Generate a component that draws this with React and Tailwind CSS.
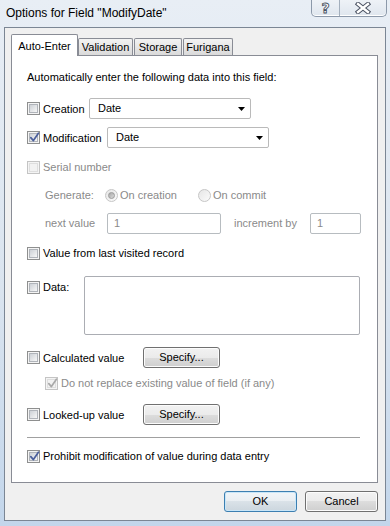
import React from 'react';

// Win7 style checkbox
const Check = ({ checked, disabled }) => (
  <span
    className={`relative flex h-[13px] w-[13px] shrink-0 items-center justify-center border bg-[#f4f4f4] ${
      disabled ? 'border-[#c4c4c4]' : 'border-[#8e8f8f]'
    }`}
  >
    <span
      className={`h-[9px] w-[9px] border ${
        disabled
          ? 'border-[#dedede] bg-[#f2f2f2]'
          : 'border-[#b0b4ba] bg-gradient-to-br from-[#cdd1d6] to-[#f7f7f7]'
      }`}
    />
    {checked && (
      <svg className="absolute left-[1px] top-[0px]" width="11" height="11" viewBox="0 0 11 11">
        <path
          d="M1.8 5.6 L4.4 8.6 L9.4 1.2"
          fill="none"
          stroke={disabled ? '#a9a9a9' : '#4b5f9c'}
          strokeWidth="1.7"
          strokeLinecap="round"
          strokeLinejoin="round"
        />
      </svg>
    )}
  </span>
);

const Radio = ({ selected }) => (
  <span className="flex h-[13px] w-[13px] shrink-0 items-center justify-center rounded-full border border-[#c6c6c6] bg-gradient-to-br from-[#e6e6e6] to-[#fbfbfb]">
    {selected && (
      <span className="h-[7px] w-[7px] rounded-full border border-[#9a9a9a] bg-gradient-to-br from-[#a8a8a8] to-[#dcdcdc]" />
    )}
  </span>
);

const CheckRow = ({ checked, disabled, label, className = '' }) => (
  <div className={`flex h-[16px] items-center ${className}`}>
    <Check checked={checked} disabled={disabled} />
    <span className={`ml-[3px] leading-[16px] ${disabled ? 'text-[#8a8a8a]' : 'text-black'}`}>{label}</span>
  </div>
);

const Select = ({ value, className = '' }) => (
  <div
    className={`flex h-[21px] w-[162px] items-center justify-between rounded-[2px] border border-[#bababa] bg-white pl-[8px] pr-[5px] ${className}`}
  >
    <span>{value}</span>
    <svg width="7" height="4" viewBox="0 0 7 4">
      <path d="M0 0 H7 L3.5 4 Z" fill="#000" />
    </svg>
  </div>
);

const Button = ({ children, primary, className = '' }) => (
  <button
    type="button"
    className={`flex h-[21px] items-center justify-center rounded-[3px] border text-black ${
      primary
        ? 'border-[#3c7fb1] bg-[linear-gradient(#f1f5f8_0%,#e9eef2_50%,#dae2e8_50%,#ccd6de_100%)] shadow-[inset_0_0_0_1px_#c9e6f8]'
        : 'border-[#707070] bg-[linear-gradient(#f2f2f2_0%,#ebebeb_50%,#dddddd_50%,#cfcfcf_100%)] shadow-[inset_0_0_0_1px_#fcfcfc]'
    } ${className}`}
  >
    {children}
  </button>
);

const Tab = ({ label, active, className = '' }) =>
  active ? (
    <div className={`flex h-[22px] items-start justify-center rounded-t-[2px] border border-b-0 border-[#898c95] bg-white pt-[3px] ${className}`}>
      {label}
    </div>
  ) : (
    <div
      className={`mb-[1px] flex h-[17px] items-center justify-center rounded-t-[2px] border border-b-0 border-[#898c95] bg-gradient-to-b from-[#f3f3f3] to-[#dadada] ${className}`}
    >
      {label}
    </div>
  );

export default function App() {
  return (
    <div className="flex h-[526px] w-[390px] flex-col overflow-hidden bg-[linear-gradient(180deg,#e8eef5_0%,#dae4ef_55%,#c3d6eb_100%)] font-['Liberation_Sans',Arial,sans-serif] text-[11px] text-black">
      {/* title bar */}
      <div className="flex h-[27px] shrink-0 items-start justify-between">
        <div className="pl-[6px] pt-[6px] text-[12px] leading-[14px]">Options for Field &quot;ModifyDate&quot;</div>
        <div className="mr-[3px] flex h-[17px] w-[76px] rounded-b-[5px] border border-t-0 border-[#8c99aa] bg-[linear-gradient(#eef2f7,#dfe6ee)] shadow-[inset_0_-1px_0_#ffffff]">
          <div className="flex w-[28px] items-center justify-center border-r border-[#a3afbd]">
            <span className="font-['DejaVu_Sans',sans-serif] text-[14px] font-bold leading-[14px] text-white [-webkit-text-stroke:0.9px_#4a5262]">?</span>
          </div>
          <div className="flex flex-1 items-center justify-center">
            <svg width="16" height="12" viewBox="0 0 16 12">
              <path d="M3 2 L13 10 M13 2 L3 10" stroke="#4a5262" strokeWidth="4.4" strokeLinecap="square" />
              <path d="M3 2 L13 10 M13 2 L3 10" stroke="#ffffff" strokeWidth="2.4" strokeLinecap="square" />
            </svg>
          </div>
        </div>
      </div>

      {/* client area */}
      <div className="ml-[4px] flex h-[494px] w-[382px] flex-col border border-[#7b8694] bg-[#f0f0f0] pl-[6px] pr-[7px] pt-[7px]">
        {/* tabs */}
        <div className="relative z-10 mb-[-1px] flex h-[21px] items-end">
          <Tab label="Auto-Enter" active className="w-[67px]" />
          <Tab label="Validation" className="w-[55px]" />
          <Tab label="Storage" className="ml-[1px] w-[48px]" />
          <Tab label="Furigana" className="ml-[1px] w-[50px]" />
        </div>

        {/* panel */}
        <div className="flex h-[428px] w-[367px] flex-col border border-[#898c95] bg-white pl-[15px] pr-[16px]">
          <div className="mt-[13px] h-[16px] leading-[16px]">Automatically enter the following data into this field:</div>

          <div className="mt-[13px] flex h-[21px] items-center">
            <CheckRow label="Creation" className="w-[62px]" />
            <Select value="Date" />
          </div>

          <div className="mt-[8px] flex h-[21px] items-center">
            <CheckRow checked label="Modification" className="w-[80px]" />
            <Select value="Date" />
          </div>

          <CheckRow disabled label="Serial number" className="mt-[11px]" />

          <div className="mt-[12px] flex h-[16px] items-center pl-[18px] text-[#8a8a8a]">
            <span className="w-[60px]">Generate:</span>
            <Radio selected />
            <span className="ml-[2px] w-[78px]">On creation</span>
            <Radio />
            <span className="ml-[2px]">On commit</span>
          </div>

          <div className="mt-[10px] flex h-[21px] items-center pl-[18px] text-[#8a8a8a]">
            <span className="w-[62px]">next value</span>
            <div className="flex h-[21px] w-[114px] items-center rounded-[2px] border border-[#b7bcc0] bg-white pl-[6px]">1</div>
            <span className="ml-[13px] w-[76px]">increment by</span>
            <div className="flex h-[21px] w-[51px] items-center rounded-[2px] border border-[#b7bcc0] bg-white pl-[6px]">1</div>
          </div>

          <CheckRow label="Value from last visited record" className="mt-[11px]" />

          <div className="mt-[15px] flex h-[59px] items-start">
            <CheckRow label="Data:" className="mt-[3px] w-[57px]" />
            <div className="h-[59px] w-[276px] rounded-[2px] border border-[#abadb3] bg-white" />
          </div>

          <div className="mt-[12px] flex h-[21px] items-center">
            <CheckRow label="Calculated value" className="w-[116px]" />
            <Button className="w-[77px]">Specify...</Button>
          </div>

          <CheckRow checked disabled label="Do not replace existing value of field (if any)" className="mt-[7px] pl-[18px]" />

          <div className="mt-[13px] flex h-[21px] items-center">
            <CheckRow label="Looked-up value" className="w-[116px]" />
            <Button className="w-[77px]">Specify...</Button>
          </div>

          <div className="mt-[12px] h-px w-[333px] bg-[#a0a0a0]" />

          <CheckRow checked label="Prohibit modification of value during data entry" className="mt-[10px]" />
        </div>

        {/* dialog buttons */}
        <div className="mt-[8px] flex justify-end gap-[8px]">
          <Button primary className="w-[73px]">OK</Button>
          <Button className="w-[73px]">Cancel</Button>
        </div>
      </div>
    </div>
  );
}
